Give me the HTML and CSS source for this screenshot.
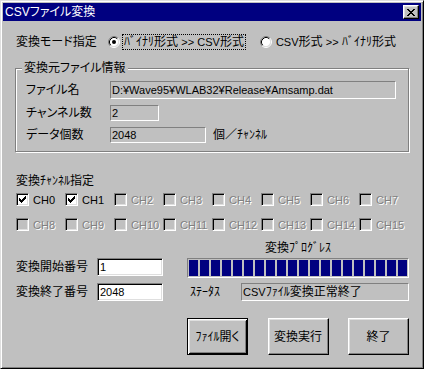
FILE: index.html
```html
<!DOCTYPE html>
<html lang="ja">
<head>
<meta charset="utf-8">
<title>CSVファイル変換</title>
<link rel="stylesheet" href="styles.css">
</head>
<body>
<div class="window">
  <div class="titlebar">
    <span class="title"><span class="lat">CSV</span>ファイル変換</span>
    <span class="close-btn">
      <svg width="8" height="7" viewBox="0 0 8 7" shape-rendering="crispEdges"><path fill="#000" d="M0 0h2v1H0zM6 0h2v1H6zM1 1h2v1H1zM5 1h2v1H5zM2 2h4v1H2zM3 3h2v1H3zM2 4h4v1H2zM1 5h2v1H1zM5 5h2v1H5zM0 6h2v1H0zM6 6h2v1H6z"/></svg>
    </span>
  </div>
  <div class="content">
    <div class="mode-row">
      <span class="mode-label">変換モード指定</span>
      <div class="mode-options">
        <span class="radio-opt">
          <svg class="radio" width="12" height="12" viewBox="0 0 12 12">
            <circle cx="6" cy="6" r="4.5" fill="#fff"/>
            <path d="M2.11 9.89A5.5 5.5 0 0 1 9.89 2.11" fill="none" stroke="#808080"/>
            <path d="M9.89 2.11A5.5 5.5 0 0 1 2.11 9.89" fill="none" stroke="#fff"/>
            <path d="M2.82 9.18A4.5 4.5 0 0 1 9.18 2.82" fill="none" stroke="#000"/>
            <path d="M9.18 2.82A4.5 4.5 0 0 1 2.82 9.18" fill="none" stroke="#dfdfdf"/>
            <circle cx="6" cy="6" r="2" fill="#000"/>
          </svg>
          <span class="radio-text focused">ﾊﾞｲﾅﾘ形式 <span class="lat">&gt;&gt; CSV</span>形式</span>
        </span>
        <span class="radio-opt">
          <svg class="radio" width="12" height="12" viewBox="0 0 12 12">
            <circle cx="6" cy="6" r="4.5" fill="#fff"/>
            <path d="M2.11 9.89A5.5 5.5 0 0 1 9.89 2.11" fill="none" stroke="#808080"/>
            <path d="M9.89 2.11A5.5 5.5 0 0 1 2.11 9.89" fill="none" stroke="#fff"/>
            <path d="M2.82 9.18A4.5 4.5 0 0 1 9.18 2.82" fill="none" stroke="#000"/>
            <path d="M9.18 2.82A4.5 4.5 0 0 1 2.82 9.18" fill="none" stroke="#dfdfdf"/>
          </svg>
          <span class="radio-text"><span class="lat">CSV</span>形式 <span class="lat">&gt;&gt;</span> ﾊﾞｲﾅﾘ形式</span>
        </span>
      </div>
    </div>

    <div class="group">
      <div class="group-title">変換元ファイル情報</div>
      <div class="info-grid">
        <span class="info-label">ファイル名</span>
        <div class="ro ro-file lat">D:¥Wave95¥WLAB32¥Release¥Amsamp.dat</div>
        <span class="info-label">チャンネル数</span>
        <div class="ro ro-ch lat">2</div>
        <span class="info-label">データ個数</span>
        <div class="inline-row">
          <div class="ro ro-data lat">2048</div>
          <span class="unit">個／ﾁｬﾝﾈﾙ</span>
        </div>
      </div>
    </div>

    <div class="ch-title">変換ﾁｬﾝﾈﾙ指定</div>
    <div class="ch-grid">
      <div class="cb"><span class="box"><svg width="7" height="7" viewBox="0 0 7 7" shape-rendering="crispEdges"><path fill="#000" d="M0 2h1v3H0zM1 3h1v3H1zM2 4h1v3H2zM3 3h1v3H3zM4 2h1v3H4zM5 1h1v3H5zM6 0h1v3H6z"/></svg></span><span class="cb-text">CH0</span></div>
      <div class="cb"><span class="box"><svg width="7" height="7" viewBox="0 0 7 7" shape-rendering="crispEdges"><path fill="#000" d="M0 2h1v3H0zM1 3h1v3H1zM2 4h1v3H2zM3 3h1v3H3zM4 2h1v3H4zM5 1h1v3H5zM6 0h1v3H6z"/></svg></span><span class="cb-text">CH1</span></div>
      <div class="cb disabled"><span class="box"></span><span class="cb-text">CH2</span></div>
      <div class="cb disabled"><span class="box"></span><span class="cb-text">CH3</span></div>
      <div class="cb disabled"><span class="box"></span><span class="cb-text">CH4</span></div>
      <div class="cb disabled"><span class="box"></span><span class="cb-text">CH5</span></div>
      <div class="cb disabled"><span class="box"></span><span class="cb-text">CH6</span></div>
      <div class="cb disabled"><span class="box"></span><span class="cb-text">CH7</span></div>
      <div class="cb disabled"><span class="box"></span><span class="cb-text">CH8</span></div>
      <div class="cb disabled"><span class="box"></span><span class="cb-text">CH9</span></div>
      <div class="cb disabled"><span class="box"></span><span class="cb-text">CH10</span></div>
      <div class="cb disabled"><span class="box"></span><span class="cb-text">CH11</span></div>
      <div class="cb disabled"><span class="box"></span><span class="cb-text">CH12</span></div>
      <div class="cb disabled"><span class="box"></span><span class="cb-text">CH13</span></div>
      <div class="cb disabled"><span class="box"></span><span class="cb-text">CH14</span></div>
      <div class="cb disabled"><span class="box"></span><span class="cb-text">CH15</span></div>
    </div>

    <div class="bottom">
      <div class="range">
        <div class="range-row">
          <span class="range-label">変換開始番号</span>
          <div class="edit lat">1</div>
        </div>
        <div class="range-row">
          <span class="range-label">変換終了番号</span>
          <div class="edit lat">2048</div>
        </div>
      </div>
      <div class="right-col">
        <div class="progress-title">変換ﾌﾟﾛｸﾞﾚｽ</div>
        <div class="progress">
          <span class="blk"></span><span class="blk"></span><span class="blk"></span><span class="blk"></span><span class="blk"></span>
          <span class="blk"></span><span class="blk"></span><span class="blk"></span><span class="blk"></span><span class="blk"></span>
          <span class="blk"></span><span class="blk"></span><span class="blk"></span><span class="blk"></span><span class="blk"></span>
          <span class="blk"></span><span class="blk"></span><span class="blk"></span><span class="blk"></span><span class="blk"></span>
        </div>
        <div class="status-row">
          <span class="status-label">ｽﾃｰﾀｽ</span>
          <div class="ro status"><span class="lat">CSV</span>ﾌｧｲﾙ変換正常終了</div>
        </div>
        <div class="buttons">
          <button class="btn default">ﾌｧｲﾙ開く</button>
          <button class="btn">変換実行</button>
          <button class="btn">終了</button>
        </div>
      </div>
    </div>
  </div>
</div>
</body>
</html>
```

FILE: styles.css
```css
* { box-sizing: border-box; }

html, body {
  margin: 0;
  padding: 0;
  background: #c0c0c0;
}

body {
  font-family: "Liberation Sans", "Noto Sans CJK JP", sans-serif;
  font-size: 12px;
  line-height: 14px;
  font-feature-settings: "palt";
  color: #000;
}

.lat {
  font-family: "Liberation Sans", "Noto Sans CJK JP", sans-serif;
  font-size: 11px;
}

.window {
  width: 424px;
  height: 369px;
  background: #c0c0c0;
  border: 1px solid;
  border-color: #dfdfdf #000 #000 #dfdfdf;
  box-shadow: inset 1px 1px #fff, inset -1px -1px #808080;
  padding: 2px;
}

.titlebar {
  height: 18px;
  background: #000080;
  color: #fff;
  display: flex;
  align-items: center;
  justify-content: space-between;
  padding: 0 2px 0 2px;
}

.title {
  white-space: nowrap;
}

.title .lat { font-size: 12px; }

.close-btn {
  width: 16px;
  height: 14px;
  background: #c0c0c0;
  border: 1px solid;
  border-color: #fff #000 #000 #fff;
  box-shadow: inset -1px -1px #808080, inset 1px 1px #dfdfdf;
  display: flex;
  align-items: center;
  justify-content: center;
}

.close-btn svg { display: block; }

.content {
  padding: 13px 12px 0 12px;
}

/* mode row */
.mode-row {
  display: flex;
  align-items: center;
  height: 16px;
}

.mode-label {
  margin-left: 1px;
  width: 92px;
  white-space: nowrap;
}

.mode-options {
  display: flex;
  align-items: center;
  gap: 14px;
}

.radio-opt {
  display: flex;
  align-items: center;
}

.radio { display: block; }

.radio-text {
  margin-left: 2px;
  padding: 0 1px;
  border: 1px dotted transparent;
  white-space: nowrap;
}

.radio-text.focused {
  border-color: #000;
}

/* group box */
.group {
  margin-top: 18px;
  height: 84px;
  border: 1px solid #808080;
  box-shadow: inset 1px 1px #fff, 1px 1px #fff;
  padding: 0 0 0 1px;
}

.group-title {
  margin: -8px 0 0 5px;
  padding: 0 2px;
  width: fit-content;
  background: #c0c0c0;
  white-space: nowrap;
}

.info-grid {
  margin-top: 6px;
  padding-left: 9px;
  display: grid;
  grid-template-columns: 84px auto;
  row-gap: 6px;
  align-items: center;
}

.info-label {
  white-space: nowrap;
}

.ro {
  height: 16px;
  border: 1px solid;
  border-color: #808080 #fff #fff #808080;
  padding: 0 1px;
  line-height: 14px;
  white-space: nowrap;
  overflow: hidden;
}

.ro-file { width: 286px; height: 18px; line-height: 16px; }
.ro-ch { width: 49px; }
.ro-data { width: 96px; }

.inline-row {
  display: flex;
  align-items: center;
}

.unit {
  margin-left: 7px;
  white-space: nowrap;
}

/* channels */
.ch-title {
  margin: 22px 0 0 1px;
}

.ch-grid {
  margin: 5px 0 0 1px;
  display: grid;
  grid-template-columns: repeat(8, 49px);
  grid-auto-rows: 13px;
  row-gap: 12px;
}

.cb {
  display: flex;
  align-items: center;
  white-space: nowrap;
}

.box {
  width: 13px;
  height: 13px;
  flex: none;
  border: 1px solid;
  border-color: #808080 #fff #fff #808080;
  box-shadow: inset 1px 1px #000, inset -1px -1px #dfdfdf;
  background: #fff;
  display: flex;
  align-items: center;
  justify-content: center;
}

.box svg { display: block; }

.cb-text {
  margin-left: 4px;
  font-size: 11px;
}

.cb.disabled .box {
  background: #c0c0c0;
}

.cb.disabled .cb-text {
  color: #808080;
  text-shadow: 1px 1px 0 #fff;
}

/* bottom */
.bottom {
  margin-top: 10px;
  display: grid;
  grid-template-columns: 172px 222px;
}

.range {
  padding-top: 17px;
  display: flex;
  flex-direction: column;
  gap: 7px;
}

.range-row {
  display: flex;
  align-items: center;
  height: 18px;
}

.range-label {
  margin-left: 1px;
  width: 81px;
  white-space: nowrap;
}

.edit {
  width: 66px;
  height: 18px;
  background: #fff;
  border: 1px solid;
  border-color: #808080 #fff #fff #808080;
  box-shadow: inset 1px 1px #000, inset -1px -1px #dfdfdf;
  padding: 0 2px;
  line-height: 16px;
}

.right-col {
  display: flex;
  flex-direction: column;
}

.progress-title {
  text-align: center;
  height: 14px;
}

.progress {
  margin-top: 3px;
  height: 20px;
  border: 1px solid;
  border-color: #808080 #fff #fff #808080;
  padding: 1px;
  display: flex;
  gap: 2px;
}

.blk {
  width: 9px;
  background: #000080;
}

.status-row {
  margin-top: 5px;
  display: flex;
  align-items: center;
}

.status-label {
  margin-left: 3px;
  width: 51px;
  white-space: nowrap;
}

.status {
  flex: 1;
  height: 18px;
  line-height: 16px;
}

.buttons {
  margin-top: 17px;
  display: flex;
  justify-content: space-between;
}

.btn {
  width: 61px;
  height: 37px;
  font: inherit;
  font-feature-settings: "palt";
  color: #000;
  background: #c0c0c0;
  border: 1px solid;
  border-color: #fff #000 #000 #fff;
  box-shadow: inset -1px -1px #808080, inset 1px 1px #dfdfdf;
  padding: 0;
  white-space: nowrap;
}

.btn.default {
  border-color: #000;
  box-shadow: inset 1px 1px #fff, inset -1px -1px #000, inset 2px 2px #dfdfdf, inset -2px -2px #808080;
}
```
